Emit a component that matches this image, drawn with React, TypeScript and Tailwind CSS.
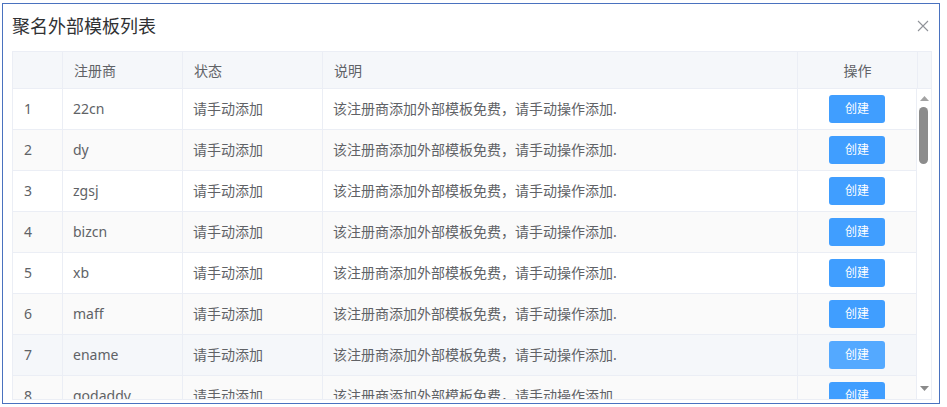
import React from "react";

const rows = ["22cn", "dy", "zgsj", "bizcn", "xb", "maff", "ename", "godaddy"];

const App = () => {
  return (
    <div className="w-[947px] h-[407px] bg-white pt-[3px] pl-[2px] font-['Noto_Sans','Noto_Sans_CJK_SC',sans-serif]">
      <div className="w-[938px] h-[401px] border border-[#4a72bf] bg-white flex flex-col overflow-hidden">
        <div className="h-[47px] flex items-center justify-between pl-[9px] pr-[9px] pb-[3px]">
          <span className="text-[18px] text-[#303133] leading-none">聚名外部模板列表</span>
          <svg width="12" height="12" viewBox="0 0 12 12" className="mr-[1px]">
            <path d="M1 1 L11 11 M11 1 L1 11" stroke="#909399" strokeWidth="1.1" />
          </svg>
        </div>
        <div className="ml-[9px] w-[920px] h-[349px] border border-[#ebeef5] flex flex-col text-[14px] text-[#606266]">
          <div className="h-[37px] flex bg-[#f5f7fa] border-b border-[#ebeef5] shrink-0">
            <div className="w-[50px] border-r border-[#ebeef5]" />
            <div className="w-[120px] border-r border-[#ebeef5] flex items-center px-[11px]">注册商</div>
            <div className="w-[140px] border-r border-[#ebeef5] flex items-center px-[11px]">状态</div>
            <div className="w-[475px] border-r border-[#ebeef5] flex items-center px-[11px]">说明</div>
            <div className="w-[120px] border-r border-[#ebeef5] flex items-center justify-center">操作</div>
            <div className="flex-1" />
          </div>
          <div className="flex flex-1 overflow-hidden">
            <div className="w-[904px] border-r border-[#ebeef5] overflow-hidden">
              {rows.map((name, i) => (
                <div
                  key={name}
                  className={`h-[41px] flex border-b border-[#ebeef5] ${
                    i === 6 ? "bg-[#f5f7fa]" : i % 2 === 1 ? "bg-[#fafafa]" : "bg-white"
                  }`}
                >
                  <div className="w-[50px] border-r border-[#ebeef5] flex items-center px-[11px] pb-[2px]">{i + 1}</div>
                  <div className="w-[120px] border-r border-[#ebeef5] flex items-center px-[10px] pb-[2px]">{name}</div>
                  <div className="w-[140px] border-r border-[#ebeef5] flex items-center px-[10px] pb-[1px]">请手动添加</div>
                  <div className="w-[475px] border-r border-[#ebeef5] flex items-center px-[10px] pb-[1px]">
                    该注册商添加外部模板免费，请手动操作添加.
                  </div>
                  <div className="flex-1 flex items-center justify-center">
                    <button
                      className={`w-[56px] h-[28px] rounded-[3px] text-white text-[12px] ${
                        i === 6 ? "bg-[#54a9ff]" : "bg-[#409eff]"
                      }`}
                    >
                      创建
                    </button>
                  </div>
                </div>
              ))}
            </div>
            <div className="flex-1 relative bg-white">
              <svg width="9" height="5" viewBox="0 0 9 5" className="absolute left-[3px] top-[7px]">
                <path d="M0 5 L4.5 0 L9 5 Z" fill="#a3a3a3" />
              </svg>
              <div className="absolute left-[2px] top-[18px] w-[9px] h-[57px] rounded-full bg-[#8c8c8c]" />
              <svg width="9" height="5" viewBox="0 0 9 5" className="absolute left-[3px] bottom-[8px]">
                <path d="M0 0 L9 0 L4.5 5 Z" fill="#8a8a8a" />
              </svg>
            </div>
          </div>
        </div>
      </div>
    </div>
  );
};

export default App;
